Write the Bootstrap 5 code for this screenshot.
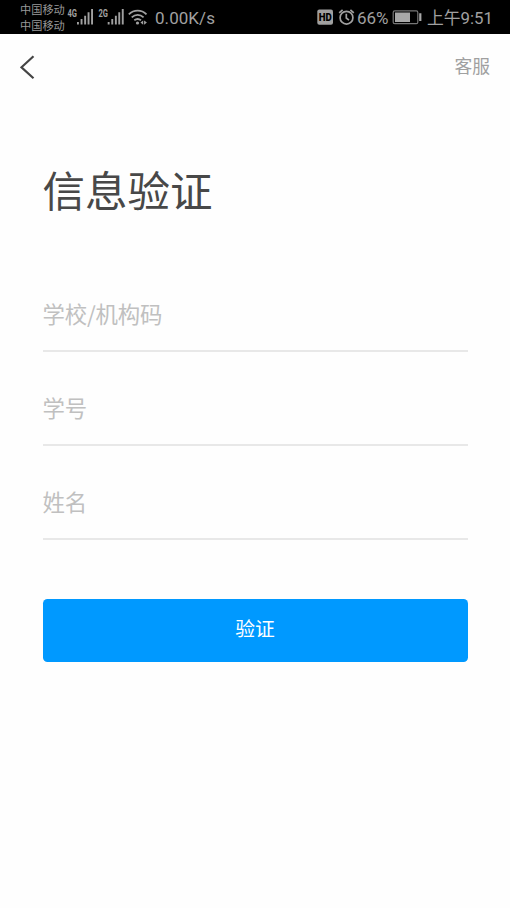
<!DOCTYPE html>
<html lang="zh-CN">
<head>
<meta charset="utf-8">
<meta name="viewport" content="width=device-width, initial-scale=1">
<title>信息验证</title>
<link href="https://cdn.jsdelivr.net/npm/bootstrap@5.3.0/dist/css/bootstrap.min.css" rel="stylesheet">
<style>
  body { font-family: "Noto Sans CJK SC", sans-serif; background: #fefefe; color: #444; }
  .status-bar { height: 34px; background: #000; color: #a0a0a0; font: 17px/34px Roboto, "Noto Sans CJK SC", sans-serif; padding: 0 18px 0 20px; }
  .carriers { width: 46px; font-size: 11.2px; line-height: 16px; padding-top: 3px; color: #989898; }
  .speed { margin-left: 5px; letter-spacing: .05px; padding-top: 1px; }
  .battery-pct { margin-left: 2px; width: 35px; padding-top: 1px; }
  .clock-time { margin-left: 5px; width: 65px; font-size: 16.8px; padding-top: 1px; }
  .top-nav { height: 66px; padding: 0 20px; }
  .service { font-size: 17.8px; line-height: 26px; color: #a0a0a0; margin-top: -5px; }
  .page-body { padding: 57px 42.5px 0; }
  .page-title { font-size: 42.5px; line-height: 64px; font-weight: 400; color: #484848; margin: 0 0 67px; }
  .line-input { height: 64.4px; font-size: 22.4px; line-height: 34px; padding: 0 0 12px; margin-bottom: 29.3px; border: 0; border-bottom: 2px solid #e8e8e8; background: transparent; border-radius: 0; }
  .line-input::placeholder { color: #c0c0c0; letter-spacing: -.15px; }
  .btn-verify { height: 62.5px; margin-top: 59.5px; background: #09f; color: #fff; font-size: 19.8px; line-height: 30px; border: 0; border-radius: 4.5px; padding: 0 0 5px; }
  .btn-verify:hover { background: #008ae6; color: #fff; }
</style>
<script src="https://cdn.jsdelivr.net/npm/bootstrap@5.3.0/dist/js/bootstrap.bundle.min.js"></script>
</head>
<body>
<header class="status-bar d-flex justify-content-between text-nowrap overflow-hidden">
  <div class="d-flex">
    <div class="carriers"><div>中国移动</div><div>中国移动</div></div>
    <svg width="84" height="34" viewBox="66 0 84 34" fill="#a0a0a0">
      <text x="67.5" y="16.500" font-family="Roboto, sans-serif" font-weight="700" font-size="10.500" textLength="9.5" lengthAdjust="spacingAndGlyphs">4G</text>
      <path d="M77 22h1.9v2.4H77zM80.6 19h1.9v5.4h-1.9zM84.2 15.7h1.9v8.7h-1.9zM87.6 12.3h1.9v12.1h-1.9zM91.1 9H93v15.4h-1.9z"/>
      <text x="98.5" y="16.500" font-family="Roboto, sans-serif" font-weight="700" font-size="10.500" textLength="9.5" lengthAdjust="spacingAndGlyphs">2G</text>
      <path d="M107.7 22h1.9v2.4h-1.9zM111.3 19h1.9v5.4h-1.9zM114.9 15.7h1.9v8.7h-1.9zM118.3 12.3h1.9v12.1h-1.9zM121.8 9h1.9v15.4h-1.9z"/>
      <g fill="none" stroke="#a0a0a0" stroke-width="1.8"><path d="M128.8 14.4c5-5 12.7-5 17.7 0M131.7 17.4c3.6-3.2 8.3-3.2 11.9 0M134.3 20.3c2-1.6 4.7-1.6 6.7 0"/></g>
      <circle cx="137.5" cy="23" r="1.6"/>
      <path d="M143.2 20.4v4.4l-2.8-2.2zM144.1 20.4v4.4l2.8-2.2z"/>
    </svg>
    <div class="speed">0.00K/s</div>
  </div>
  <div class="d-flex">
    <svg width="38" height="34" viewBox="317 0 38 34">
      <rect x="317.3" y="9.5" width="15.7" height="15.3" rx="2" fill="#a0a0a0"/>
      <text x="318.7" y="21" font-family="Roboto, sans-serif" font-weight="900" font-size="10.5" textLength="13" lengthAdjust="spacingAndGlyphs" fill="#000">HD</text>
      <g fill="none" stroke="#a0a0a0" stroke-width="1.7"><circle cx="346.5" cy="17.7" r="6.4"/><path d="M339.2 12.8l3.4-3M353.8 12.8l-3.4-3M346.3 13.7v4.3l2.7 2.2"/></g>
    </svg>
    <div class="battery-pct">66%</div>
    <svg width="30" height="34" viewBox="392 0 30 34">
      <rect x="393.2" y="10.9" width="24.6" height="12.8" rx="1.5" fill="none" stroke="#777" stroke-width="1.2"/>
      <path d="M395 12.5h15v9.5h-15zM419.2 13.2h2.2v7.800h-2.2z" fill="#a8a8a8"/>
    </svg>
    <div class="clock-time">上午9:51</div>
  </div>
</header>
<nav class="top-nav d-flex align-items-center justify-content-between">
  <a href="#" aria-label="返回" class="d-flex">
    <svg width="15" height="26" viewBox="0 0 15 26" fill="none" stroke="#444" stroke-width="2.2"><path d="M13.5 2.3L1.5 13.3l12 11"/></svg>
  </a>
  <a href="#" class="service text-decoration-none">客服</a>
</nav>
<main class="page-body">
  <h1 class="page-title">信息验证</h1>
  <form>
    <input class="form-control shadow-none line-input" type="text" placeholder="学校/机构码" aria-label="学校/机构码">
    <input class="form-control shadow-none line-input" type="text" placeholder="学号" aria-label="学号">
    <input class="form-control shadow-none line-input mb-0" type="text" placeholder="姓名" aria-label="姓名">
    <button type="button" class="btn btn-verify w-100">验证</button>
  </form>
</main>
</body>
</html>
